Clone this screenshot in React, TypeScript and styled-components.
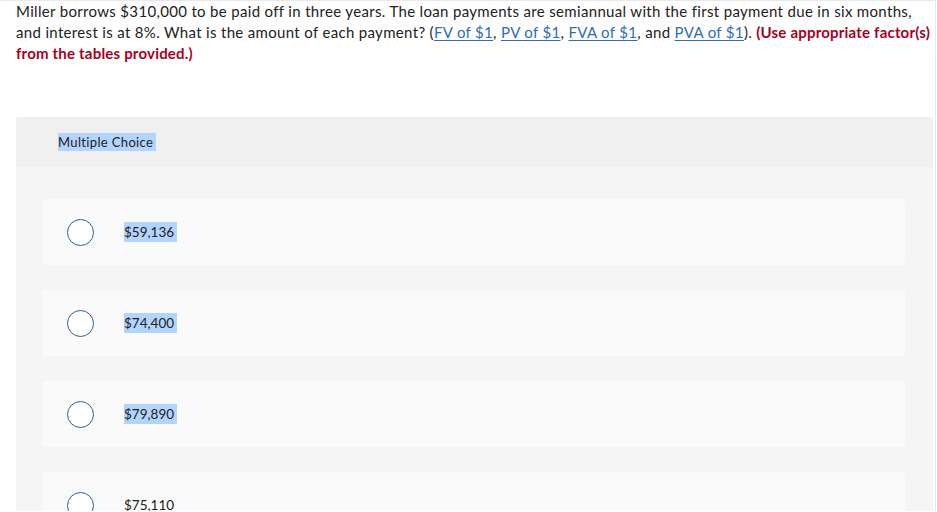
import React from "react";
import styled, { createGlobalStyle } from "styled-components";

const Global = createGlobalStyle`
  html, body { margin: 0; padding: 0; background: #fff; }
  body { font-family: Lato, "Open Sans", sans-serif; color: #222; }
  ::selection { background: #b3d4fc; }
`;

const Page = styled.div`
  border-top: 1px solid #e9e9e9;
  border-right: 1px solid #e9e9e9;
  width: 936px;
  height: 511px;
  overflow: hidden;
  box-sizing: border-box;
  padding: 0 0 0 16px;
`;

const Question = styled.p`
  margin: 0;
  font-size: 15px;
  line-height: 21px;
  letter-spacing: 0.33px;
  color: #222;
`;

const Link = styled.a`
  color: #2f6db5;
  text-decoration: underline;
  text-underline-offset: 2px;
`;

const Emph = styled.strong`
  color: #a8001e;
  font-weight: 700;
  letter-spacing: 0.2px;
`;

const Panel = styled.section`
  margin-top: 53px;
  width: 917px;
  background: #f5f5f5;
  border-radius: 3px 3px 0 0;
`;

const PanelHeader = styled.div`
  height: 50px;
  background: #f0f0f0;
  display: flex;
  align-items: center;
  padding-left: 42px;
  font-size: 13px;
  letter-spacing: 0.35px;
  border-radius: 3px 3px 0 0;
`;

const Highlight = styled.span`
  background: #b3d4fc;
  padding: 1px 3px 1px 0;
  color: #222;
`;

const Options = styled.div`
  display: flex;
  flex-direction: column;
  gap: 25px;
  padding: 32px 28px 40px 26px;
`;

const Card = styled.label`
  display: flex;
  align-items: center;
  gap: 30px;
  height: 66px;
  padding-left: 25px;
  background: #fafafa;
  border-radius: 3px;
  font-size: 13.5px;
`;

const Radio = styled.span`
  width: 25px;
  height: 25px;
  border-radius: 50%;
  border: 1.5px solid #2d5f93;
  background: #fff;
  flex: none;
`;

const Answer = styled.span<{ $selected: boolean }>`
  background: ${(p) => (p.$selected ? "#b3d4fc" : "transparent")};
  padding: 2px 3px 2px 0;
  color: #222;
`;

const choices = [
  { v: "$59,136", s: true },
  { v: "$74,400", s: true },
  { v: "$79,890", s: true },
  { v: "$75,110", s: false },
];

export default function App() {
  return (
    <>
      <Global />
      <Page>
        <Question>
          Miller borrows $310,000 to be paid off in three years. The loan payments are semiannual with the first
          payment due in six months, and interest is at 8%. What is the amount of each payment? (
          <Link href="#">FV of $1</Link>, <Link href="#">PV of $1</Link>, <Link href="#">FVA of $1</Link>, and{" "}
          <Link href="#">PVA of $1</Link>). <Emph>(Use appropriate factor(s) from the tables provided.)</Emph>
        </Question>
        <Panel>
          <PanelHeader>
            <Highlight>Multiple Choice</Highlight>
          </PanelHeader>
          <Options>
            {choices.map((c) => (
              <Card key={c.v}>
                <Radio />
                <Answer $selected={c.s}>{c.v}</Answer>
              </Card>
            ))}
          </Options>
        </Panel>
      </Page>
    </>
  );
}
